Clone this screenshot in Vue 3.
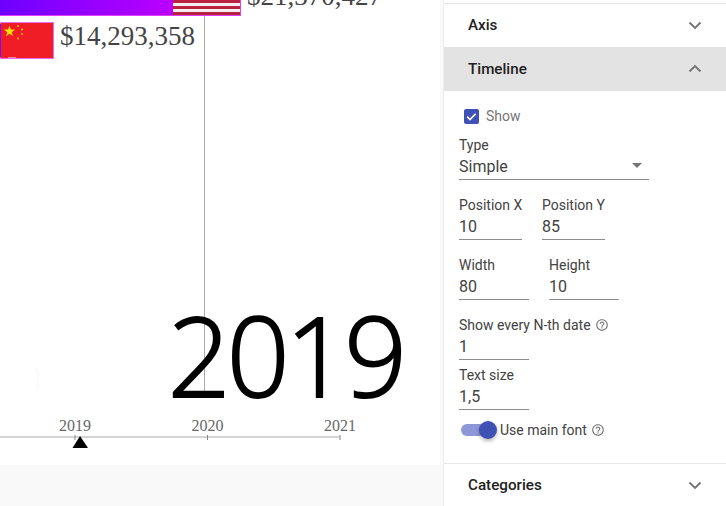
<script setup>
const stripes = [0, 6, 12]
const dots = [[18, 26], [22, 29.5], [22, 34], [18, 38.5]]
const ticks = [
  { x: 75, label: '2019' },
  { x: 207.5, label: '2020' },
  { x: 340, label: '2021' },
]
const chevronDown = 'M6.5 9.5 12 15l5.5-5.5'
const chevronUp = 'M6.5 14.5 12 9l5.5 5.5'
const helpPath = 'M11 18h2v-2h-2v2zm1-16C6.48 2 2 6.48 2 12s4.48 10 10 10 10-4.48 10-10S17.52 2 12 2zm0 18c-4.41 0-8-3.59-8-8s3.59-8 8-8 8 3.59 8 8-3.59 8-8 8zm0-14c-2.21 0-4 1.79-4 4h2c0-1.1.9-2 2-2s2 .9 2 2c0 2-3 1.75-3 5h2c0-2.25 3-2.5 3-5 0-2.21-1.79-4-4-4z'
</script>

<template>
  <div class="page">
    <main class="stage">
      <svg class="chart" width="440" height="465" viewBox="0 0 440 465">
        <defs>
          <linearGradient id="bar" x1="0" x2="1" y1="0" y2="0">
            <stop offset="0" stop-color="#6e00ff" />
            <stop offset="1" stop-color="#bb00ff" />
          </linearGradient>
        </defs>

        <rect x="0" y="-10" width="241" height="26" fill="#e040fb" />
        <rect x="0" y="-10" width="173" height="25" fill="url(#bar)" />
        <rect x="173" y="-10" width="67" height="25" fill="#f4eef0" />
        <rect v-for="s in stripes" :key="s" x="173" :y="s" width="67" height="3" fill="#b8213f" />
        <text class="value" x="247" y="5">$21,370,427</text>

        <rect x="0" y="22" width="54" height="37" fill="#e66ef0" />
        <rect x="1" y="23" width="52" height="35" fill="#f01c26" />
        <rect x="0" y="24" width="1" height="33" fill="#7a10ee" />
        <path d="M9.5 25.5l1.4 4.1h4.3l-3.5 2.6 1.3 4.1-3.5-2.5-3.5 2.5 1.3-4.1-3.5-2.6h4.3z" fill="#ffe000" />
        <circle v-for="d in dots" :key="d[1]" :cx="d[0]" :cy="d[1]" r="1.1" fill="#fbb615" />
        <rect x="8" y="57" width="8" height="1" fill="#f58a90" />
        <text class="value" x="60" y="45">$14,293,358</text>

        <line x1="204.5" y1="16" x2="204.5" y2="397" stroke="#aaa" />
        <text class="year" x="403" y="396.5" text-anchor="end">2019</text>

        <path d="M36 368c3 5 3 15 0 20" fill="none" stroke="#fafafa" stroke-width="2" />

        <line x1="0" y1="437" x2="340" y2="437" stroke="#aaa" />
        <g v-for="t in ticks" :key="t.label">
          <line :x1="t.x" y1="435" :x2="t.x" y2="440" stroke="#888" />
          <text class="tick" :x="t.x" y="431" text-anchor="middle">{{ t.label }}</text>
        </g>
        <polygon points="80,436 88,448 72.5,448" fill="#000" />
      </svg>
      <div class="footer"></div>
    </main>

    <div class="gutter"></div>

    <aside class="panel">
      <header class="section axis">
        <span>Axis</span>
        <svg class="chev" viewBox="0 0 24 24"><path :d="chevronDown" /></svg>
      </header>
      <header class="section open">
        <span>Timeline</span>
        <svg class="chev" viewBox="0 0 24 24"><path :d="chevronUp" /></svg>
      </header>

      <section class="body">
        <label class="check">
          <span class="box">
            <svg viewBox="0 0 16 16" width="15" height="15"><path d="M3.4 8.2l3 3 6-6.2" fill="none" stroke="#fff" stroke-width="1.7" /></svg>
          </span>
          <span>Show</span>
        </label>

        <div class="field type">
          <div class="label">Type</div>
          <div class="input select">
            <span>Simple</span>
            <span class="caret"></span>
          </div>
        </div>

        <div class="pair first">
          <div class="field w63">
            <div class="label">Position X</div>
            <div class="input">10</div>
          </div>
          <div class="field w63">
            <div class="label">Position Y</div>
            <div class="input">85</div>
          </div>
        </div>

        <div class="pair second">
          <div class="field w70">
            <div class="label">Width</div>
            <div class="input">80</div>
          </div>
          <div class="field w70">
            <div class="label">Height</div>
            <div class="input">10</div>
          </div>
        </div>

        <div class="field w70 nth">
          <div class="label">
            Show every N-th date
            <svg class="help" viewBox="0 0 24 24"><path :d="helpPath" /></svg>
          </div>
          <div class="input">1</div>
        </div>

        <div class="field w70 size">
          <div class="label">Text size</div>
          <div class="input">1,5</div>
        </div>

        <div class="switch-row">
          <span class="switch"><span class="track"></span><span class="thumb"></span></span>
          <span class="switch-label">Use main font</span>
          <svg class="help" viewBox="0 0 24 24"><path :d="helpPath" /></svg>
        </div>
      </section>

      <header class="section last">
        <span>Categories</span>
        <svg class="chev" viewBox="0 0 24 24"><path :d="chevronDown" /></svg>
      </header>
    </aside>
  </div>
</template>

<style>
html, body { margin: 0; background: #fff; }
</style>

<style scoped>
.page {
  width: 726px;
  height: 506px;
  display: flex;
  overflow: hidden;
  background: #fff;
  font-family: Roboto, "Liberation Sans", sans-serif;
}
.stage {
  width: 440px;
  flex: none;
  display: flex;
  flex-direction: column;
}
.chart { display: block; flex: none; }
.footer { flex: 1; background: #f9f9f9; }
.gutter { width: 3px; flex: none; background: #f9f9f9; }
.value { font: 27px "Liberation Serif", serif; fill: #444; }
.year { font: 300 110px "Open Sans", Roboto, sans-serif; letter-spacing: -4px; fill: #000; stroke: #000; stroke-width: 2px; }
.tick { font: 16px "Liberation Serif", serif; fill: #666; }

.panel {
  width: 283px;
  flex: none;
  height: 506px;
  box-sizing: border-box;
  padding-top: 3px;
  display: flex;
  flex-direction: column;
  background: #fff;
  border-left: 1px solid #eee;
}
.section {
  height: 44px;
  flex: none;
  box-sizing: border-box;
  padding: 0 19px 0 24px;
  display: flex;
  align-items: center;
  justify-content: space-between;
  font-size: 15.2px;
  font-weight: 500;
  color: #212121;
  border-top: 1px solid #e6e6e6;
}
.section.axis { padding-bottom: 1px; }
.section.open { background: #e3e3e3; border-top: 0; }
.section.last { height: 43px; }
.chev { width: 24px; height: 24px; fill: none; stroke: #757575; stroke-width: 1.9; }

.body {
  flex: 1;
  padding: 15px 0 0 15px;
  color: #424242;
  font-size: 14px;
}
.check {
  display: flex;
  align-items: center;
  height: 20px;
  margin-left: 5px;
  gap: 7px;
  color: #757575;
}
.box {
  width: 15px;
  height: 15px;
  border-radius: 2px;
  background: #3f51b5;
  display: block;
}
.box svg { display: block; }
.field { box-sizing: border-box; }
.label {
  height: 20px;
  line-height: 20px;
  color: #424242;
  display: flex;
  align-items: center;
  white-space: nowrap;
}
.input {
  height: 24px;
  line-height: 24px;
  box-sizing: content-box;
  font-size: 16px;
  color: #424242;
  border-bottom: 1px solid #8c8c8c;
}
.type { margin-top: 9px; width: 190px; }
.select { display: flex; justify-content: space-between; align-items: center; }
.caret {
  width: 0;
  height: 0;
  margin: 0 7px 3px 0;
  border-left: 5px solid transparent;
  border-right: 5px solid transparent;
  border-top: 5px solid #757575;
}
.pair { display: flex; }
.first { margin-top: 15px; gap: 20px; }
.second { margin-top: 15px; gap: 20px; }
.w63 { width: 63px; }
.w70 { width: 70px; }
.nth { margin-top: 15px; }
.size { margin-top: 5px; }
.help {
  width: 14px;
  height: 14px;
  margin-left: 4px;
  fill: #757575;
  flex: none;
}
.switch-row {
  display: flex;
  align-items: center;
  height: 20px;
  margin-top: 10px;
}
.switch {
  position: relative;
  width: 36px;
  height: 20px;
  margin-left: 2px;
  flex: none;
}
.track {
  position: absolute;
  left: 0;
  top: 4px;
  width: 30px;
  height: 12px;
  border-radius: 6px;
  background: #8f98d6;
}
.thumb {
  position: absolute;
  left: 18px;
  top: 1px;
  width: 18px;
  height: 18px;
  border-radius: 50%;
  background: #3f51b5;
  box-shadow: 0 2px 4px rgba(0, 0, 0, 0.3);
}
.switch-label { margin-left: 3px; color: #424242; }
</style>
